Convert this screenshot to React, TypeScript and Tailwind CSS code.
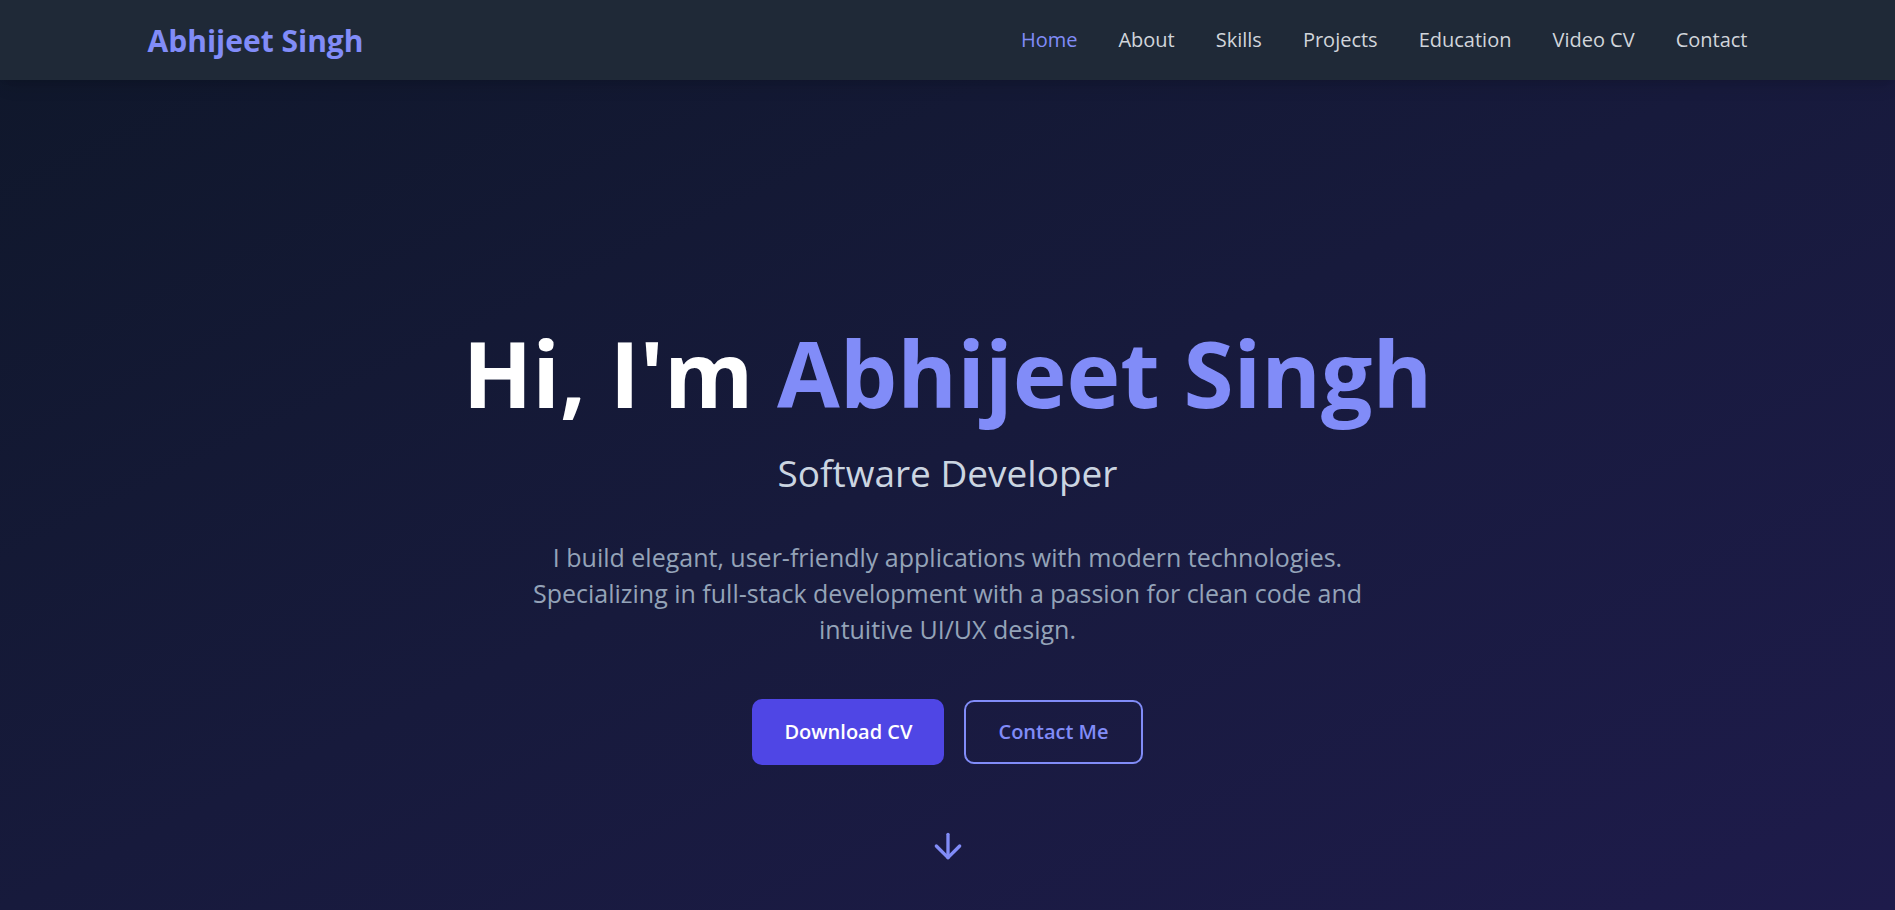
import { ArrowDown } from "lucide-react";

const links = ["Home", "About", "Skills", "Projects", "Education", "Video CV", "Contact"];

export default function App() {
  return (
    <div
      className="min-h-screen flex flex-col bg-gradient-to-br from-[#0f172a] via-[#171a3c] to-[#1e1b4b]"
      style={{ fontFamily: '"Open Sans", "Noto Sans", sans-serif' }}
    >
      <nav className="h-20 bg-[#1f2937] shadow-lg shrink-0">
        <div className="max-w-[1600px] mx-auto h-full flex items-center justify-between">
          <a href="#" className="text-[30px] font-bold text-[#818cf8]">
            Abhijeet Singh
          </a>
          <ul className="flex items-center gap-[41px]">
            {links.map((l, i) => (
              <li key={l}>
                <a
                  href="#"
                  className={`text-[20px] ${i === 0 ? "text-[#818cf8]" : "text-[#d1d5db]"}`}
                >
                  {l}
                </a>
              </li>
            ))}
          </ul>
        </div>
      </nav>

      <section className="relative flex-1 h-[830px] flex flex-col items-center pt-[248px]">
        <h1 className="text-[91px] font-bold leading-none text-white">
          Hi, I'm <span className="text-[#818cf8]">Abhijeet Singh</span>
        </h1>
        <h2 className="mt-[31px] text-[37px] text-[#cbd5e1] leading-tight">Software Developer</h2>
        <p className="mt-[43px] max-w-[848px] text-center text-[25px] leading-[36px] text-[#94a3b8]">
          I build elegant, user-friendly applications with modern technologies. Specializing in
          full-stack development with a passion for clean code and intuitive UI/UX design.
        </p>
        <div className="mt-[52px] flex items-center gap-5">
          <a
            href="#"
            className="h-[66px] px-8 flex items-center rounded-[10px] bg-[#4f46e5] text-white text-[20px] font-semibold"
          >
            Download CV
          </a>
          <a
            href="#"
            className="h-[64px] px-8 flex items-center rounded-[10px] border-2 border-[#818cf8] text-[#818cf8] text-[20px] font-semibold"
          >
            Contact Me
          </a>
        </div>
        <div className="absolute bottom-11 left-1/2 -translate-x-1/2 text-[#818cf8]">
          <ArrowDown size={40} strokeWidth={2} />
        </div>
      </section>
    </div>
  );
}
